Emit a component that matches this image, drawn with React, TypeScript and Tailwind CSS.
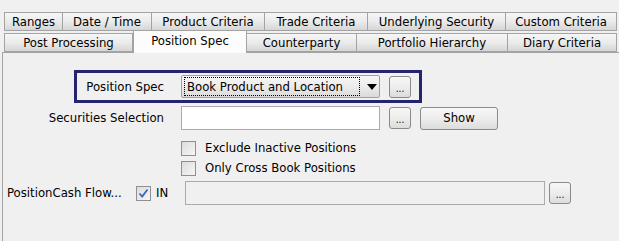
import React from "react";

const row1 = [
  { label: "Ranges", w: 59 },
  { label: "Date / Time", w: 89 },
  { label: "Product Criteria", w: 113 },
  { label: "Trade Criteria", w: 103 },
  { label: "Underlying Security", w: 138 },
  { label: "Custom Criteria", w: 111 },
];

const row2 = [
  { label: "Post Processing", w: 129 },
  { label: "Position Spec", w: 114, active: true },
  { label: "Counterparty", w: 110 },
  { label: "Portfolio Hierarchy", w: 151 },
  { label: "Diary Criteria", w: 109 },
];

function Tab({ label, w, active }: { label: string; w: number; active?: boolean }) {
  if (active) {
    return (
      <div
        style={{ width: w }}
        className="relative z-10 -mb-px flex h-[23px] items-start justify-center border border-b-0 border-[#a3a3a3] bg-[#fcfcfc] pt-[2px]"
      >
        {label}
      </div>
    );
  }
  return (
    <div
      style={{ width: w }}
      className="flex h-[19px] items-center justify-center border border-[#a3a3a3] border-l-0 first:border-l bg-linear-to-b from-[#f6f6f6] via-[#ebebeb] to-[#d6d6d6] pt-px"
    >
      {label}
    </div>
  );
}

function DotsButton({ className = "" }: { className?: string }) {
  return (
    <button
      className={`flex h-[22px] w-[22px] items-end justify-center rounded-[3px] border border-[#8a8a8a] bg-linear-to-b from-[#f7f7f7] via-[#ededed] to-[#dcdcdc] pb-[3px] text-[10px] leading-none ${className}`}
    >
      ...
    </button>
  );
}

function CheckBox({ checked }: { checked?: boolean }) {
  return (
    <span className="flex h-[15px] w-[15px] shrink-0 items-center justify-center border border-[#8e8f8f] bg-linear-to-br from-[#dcdcdc] to-[#f6f6f6]">
      {checked && (
        <svg viewBox="0 0 11 11" className="h-[11px] w-[11px]">
          <path d="M1.5 5.5 L4.2 8.5 L9.5 1.5" fill="none" stroke="#3a66b8" strokeWidth="1.8" />
        </svg>
      )}
    </span>
  );
}

export default function App() {
  return (
    <div
      className="h-[241px] w-[619px] overflow-hidden bg-[#f0f0f0] text-[13px] leading-[16px] text-black"
      style={{ fontFamily: '"DejaVu Sans Condensed", "DejaVu Sans", sans-serif' }}
    >
      <div className="pl-[4px] pt-[12px]">
        <div className="flex">
          {row1.map((t) => (
            <Tab key={t.label} {...t} />
          ))}
        </div>
        <div className="-mt-px flex items-end">
          {row2.map((t) => (
            <Tab key={t.label} {...t} />
          ))}
        </div>
      </div>

      <div className="ml-[2px] h-[200px] border-l border-t border-[#a3a3a3] pt-[17px]">
        <div className="ml-[71px] flex h-[33px] w-[348px] items-center border-[3px] border-[#25256e]">
          <span className="w-[87px] text-right">Position Spec</span>
          <div className="ml-[17px] flex h-[23px] w-[199px] items-center rounded-[2px] border border-[#a0a0a0] bg-linear-to-b from-[#f6f6f6] via-[#ececec] to-[#dadada] px-[2px]">
            <span className="flex h-[19px] w-[177px] items-center border border-dotted border-black pl-[2px]">
              Book Product and Location
            </span>
            <svg viewBox="0 0 10 6" className="ml-[7px] h-[6px] w-[10px]">
              <path d="M0 0 H10 L5 6 Z" fill="#000" />
            </svg>
          </div>
          <DotsButton className="ml-[9px]" />
        </div>

        <div className="mt-[3px] flex items-center">
          <span className="w-[161px] text-right">Securities Selection</span>
          <div className="ml-[17px] h-[24px] w-[199px] border border-[#ababab] bg-white" />
          <DotsButton className="ml-[9px]" />
          <button className="ml-[9px] flex h-[23px] w-[78px] items-center justify-center rounded-[3px] border border-[#8a8a8a] bg-linear-to-b from-[#f7f7f7] via-[#ededed] to-[#dcdcdc]">
            Show
          </button>
        </div>

        <div className="ml-[178px] mt-[10px] flex flex-col gap-[4px]">
          <label className="flex h-[16px] items-center gap-[9px]">
            <CheckBox />
            <span>Exclude Inactive Positions</span>
          </label>
          <label className="flex h-[16px] items-center gap-[9px]">
            <CheckBox />
            <span>Only Cross Book Positions</span>
          </label>
        </div>

        <div className="mt-[5px] flex items-center">
          <span className="ml-[4px] w-[129px] whitespace-nowrap">PositionCash Flow...</span>
          <CheckBox checked />
          <span className="ml-[5px] w-[28px]">IN</span>
          <div className="ml-[1px] h-[24px] w-[360px] border border-[#ababab] bg-[#f0f0f0]" />
          <DotsButton className="ml-[4px]" />
        </div>
      </div>
    </div>
  );
}
